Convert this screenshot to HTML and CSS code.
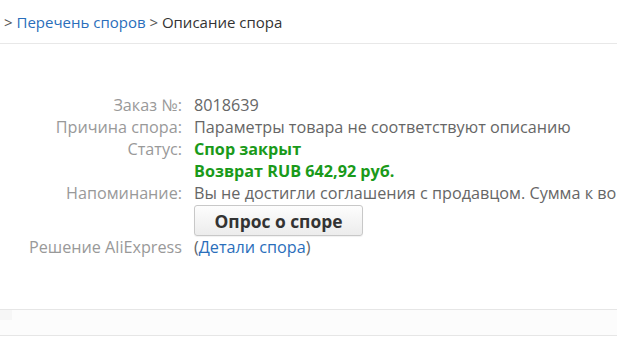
FILE: index.html
```html
<!DOCTYPE html>
<html lang="ru">
<head>
  <meta charset="UTF-8">
  <title>Описание спора</title>
  <link rel="stylesheet" href="styles.css">
</head>
<body>
  <div class="crumbs">
    &gt; <a href="#">Перечень споров</a> &gt; <span class="current">Описание спора</span>
  </div>

  <div class="detail">
    <div class="row">
      <div class="label">Заказ №:</div>
      <div class="value">8018639</div>
    </div>
    <div class="row">
      <div class="label">Причина спора:</div>
      <div class="value">Параметры товара не соответствуют описанию</div>
    </div>
    <div class="row">
      <div class="label">Статус:</div>
      <div class="value status">Спор закрыт<br>Возврат RUB 642,92 руб.</div>
    </div>
    <div class="row">
      <div class="label">Напоминание:</div>
      <div class="value">
        <div class="clip">Вы не достигли соглашения с продавцом. Сумма к во</div>
        <div><button type="button">Опрос о споре</button></div>
      </div>
    </div>
    <div class="row">
      <div class="label">Решение AliExpress</div>
      <div class="value">(<a href="#">Детали спора</a>)</div>
    </div>
  </div>

  <div class="strip"><span class="corner"></span></div>
</body>
</html>
```

FILE: styles.css
```css
body {
  margin: 0;
  font-family: "Open Sans", "Liberation Sans", sans-serif;
  font-size: 16.2px;
  color: #666;
  background: #fff;
  overflow: hidden;
}
a {
  color: #2a6ebb;
  text-decoration: none;
}
.crumbs {
  height: 43px;
  line-height: 44px;
  padding-left: 4px;
  font-size: 15px;
  color: #555;
  border-bottom: 1px solid #e8e8e8;
  white-space: nowrap;
}
.crumbs .current {
  color: #333;
}
.detail {
  padding: 50px 0 51px;
  border-bottom: 1px solid #e6e6e6;
}
.row {
  display: flex;
  gap: 12px;
  line-height: 22px;
}
.label {
  flex: 0 0 182px;
  text-align: right;
  color: #999;
  white-space: nowrap;
}
.value {
  min-width: 0;
  white-space: nowrap;
}
.clip {
  width: 423px;
  overflow: hidden;
}
.status {
  color: #1a9a1a;
  font-weight: bold;
}
button {
  margin: 1px 0 0;
  width: 169px;
  height: 31px;
  font-family: inherit;
  font-size: 17.4px;
  font-weight: bold;
  color: #333;
  background: linear-gradient(#fdfdfd, #ececec);
  border: 1px solid #c8c8c8;
  border-radius: 3px;
  box-shadow: 0 1px 1px rgba(0, 0, 0, 0.06);
  cursor: pointer;
}
.strip {
  height: 25px;
  background: #fcfcfc;
  border-bottom: 1px solid #e6e6e6;
}
.corner {
  display: block;
  width: 12px;
  height: 10px;
  background: #f6f6f6;
}
```
